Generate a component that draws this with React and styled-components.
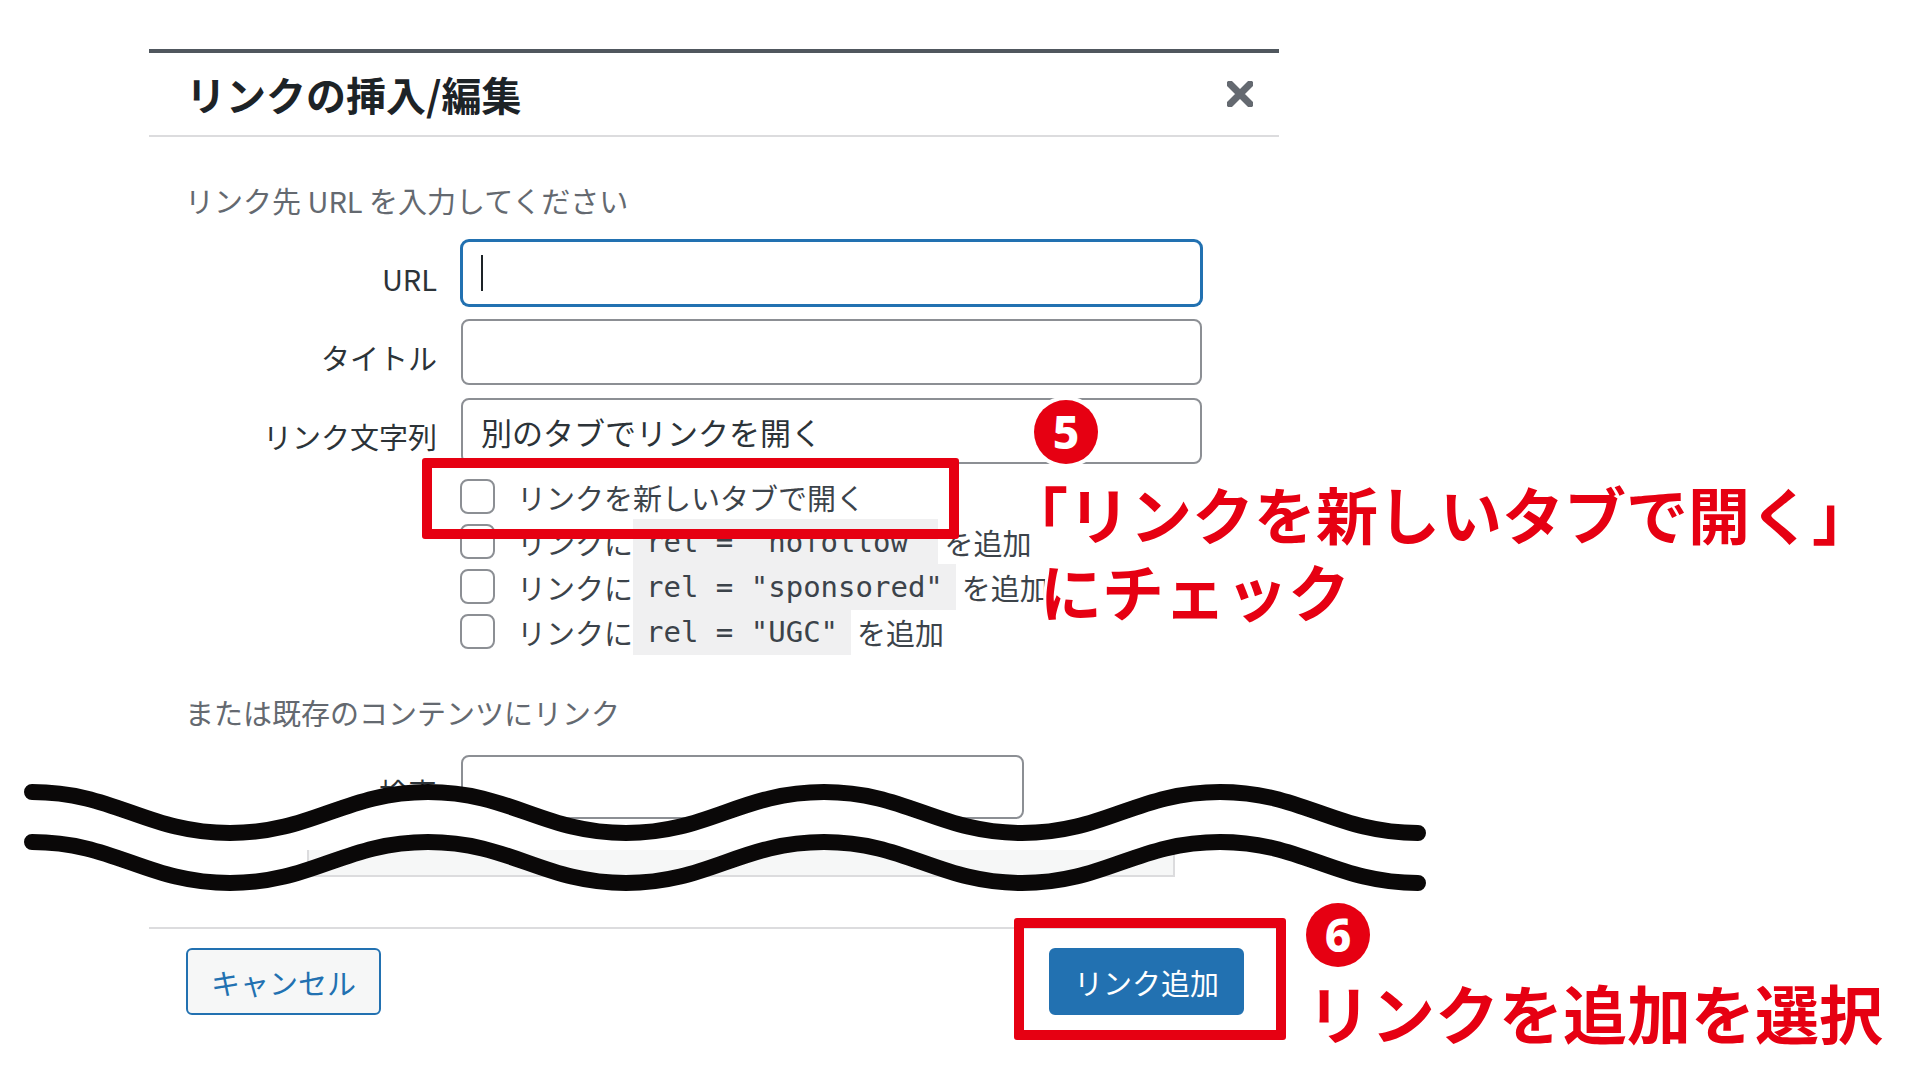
import React from 'react';
import styled, { createGlobalStyle } from 'styled-components';

const Global = createGlobalStyle`
  html, body { margin: 0; padding: 0; background: #fff; }
  body { font-family: "Noto Sans CJK JP", "Noto Sans", sans-serif; }
  * { box-sizing: border-box; }
`;

const Page = styled.div`
  position: relative;
  width: 1920px;
  height: 1080px;
  overflow: hidden;
  background: #fff;
  padding: 49px 0 0 149px;
`;

const Dialog = styled.section`
  width: 1130px;
  border-top: 4px solid #50575e;
  background: #fff;
`;

const Header = styled.header`
  height: 84px;
  display: flex;
  align-items: center;
  justify-content: space-between;
  padding: 0 26px 0 37px;
  border-bottom: 2px solid #dcdcde;
`;

const Title = styled.h1`
  margin: 0;
  font-size: 40px;
  font-weight: 700;
  line-height: 1;
  color: #1d2327;
`;

const CloseButton = styled.button`
  border: 0;
  background: none;
  padding: 0;
  width: 26px;
  height: 26px;
  display: flex;
  cursor: pointer;
`;

const Body = styled.div`
  padding: 0 36px;
`;

const SectionLabel = styled.p`
  margin: ${(p) => p.$top}px 0 0;
  font-size: 29px;
  line-height: 40px;
  color: #646970;
`;

const FieldRow = styled.label`
  display: flex;
  align-items: center;
  margin-top: ${(p) => p.$top}px;
`;

const FieldLabel = styled.span`
  flex: none;
  width: 252px;
  margin-right: 24px;
  padding-top: 10px;
  text-align: right;
  font-size: 29px;
  line-height: 40px;
  color: #2c3338;
  white-space: nowrap;
`;

const TextBox = styled.div`
  width: ${(p) => p.$w}px;
  height: ${(p) => p.$h}px;
  display: flex;
  align-items: center;
  padding: 0 18px;
  background: #fff;
  border: 2px solid ${(p) => (p.$focus ? '#2271b1' : '#8c8f94')};
  box-shadow: ${(p) => (p.$focus ? '0 0 0 1px #2271b1' : 'none')};
  border-radius: 8px;
  font-size: 31px;
  color: #2c3338;
  white-space: nowrap;
`;

const Caret = styled.span`
  display: block;
  width: 2px;
  height: 36px;
  background: #1d2327;
`;

const CheckList = styled.div`
  margin: 10px 0 0 275px;
  display: flex;
  flex-direction: column;
`;

const CheckRow = styled.label`
  height: 45px;
  display: flex;
  align-items: center;
  font-size: 29px;
  color: #3c434a;
  white-space: nowrap;
`;

const CheckBox = styled.span`
  flex: none;
  width: 35px;
  height: 35px;
  margin-right: 22px;
  border: 2px solid #8c8f94;
  border-radius: 8px;
  background: #fff;
`;

const Code = styled.code`
  display: inline-block;
  height: 46px;
  line-height: 46px;
  padding: 0 13px;
  margin-right: 6px;
  background: #f0f0f1;
  font-family: "DejaVu Sans Mono", "Liberation Mono", monospace;
  font-size: 29px;
  color: #3c434a;
`;

const ResultsStrip = styled.div`
  margin: 31px 0 0 122px;
  width: 868px;
  height: 27px;
  background: #f6f7f7;
  border: 2px solid #dcdcde;
  border-top: 0;
`;

const Footer = styled.footer`
  margin-top: 50px;
  display: flex;
  justify-content: space-between;
  padding: 19px 35px 40px 37px;
  border-top: 2px solid #dcdcde;
`;

const Button = styled.button`
  height: 67px;
  padding: 0 23px;
  border: 2px solid #2271b1;
  border-radius: 6px;
  background: ${(p) => (p.$primary ? '#2271b1' : '#f6f7f7')};
  color: ${(p) => (p.$primary ? '#fff' : '#2271b1')};
  font-family: "Noto Sans CJK JP", "Noto Sans", sans-serif;
  font-size: 29px;
  cursor: pointer;
`;

/* ---- annotations lying over the screenshot ---- */

const RedFrame = styled.div`
  position: absolute;
  left: ${(p) => p.$x}px;
  top: ${(p) => p.$y}px;
  width: ${(p) => p.$w}px;
  height: ${(p) => p.$h}px;
  border: 10px solid #e60012;
  border-radius: 3px;
  pointer-events: none;
`;

const Badge = styled.div`
  position: absolute;
  left: ${(p) => p.$x}px;
  top: ${(p) => p.$y}px;
  width: 64px;
  height: 64px;
  border-radius: 50%;
  background: #e60012;
  box-shadow: 0 0 0 4px #fff;
  color: #fff;
  display: flex;
  align-items: center;
  justify-content: center;
  font-family: "Noto Sans", "Liberation Sans", sans-serif;
  font-weight: 800;
  font-size: 46px;
  line-height: 1;
  padding-bottom: 2px;
`;

const Note = styled.div`
  position: absolute;
  left: ${(p) => p.$x}px;
  top: ${(p) => p.$y}px;
  color: #e60012;
  font-family: "Noto Sans CJK JP", sans-serif;
  font-weight: 700;
  font-size: ${(p) => p.$size}px;
  line-height: ${(p) => p.$lh}px;
  white-space: nowrap;
  text-shadow: 3px 0 0 #fff, -3px 0 0 #fff, 0 3px 0 #fff, 0 -3px 0 #fff,
    2px 2px 0 #fff, -2px -2px 0 #fff, 2px -2px 0 #fff, -2px 2px 0 #fff;
`;

const NoteLine = styled.div`
  margin-left: ${(p) => p.$indent || 0}px;
`;

const WaveSvg = styled.svg`
  position: absolute;
  left: 0;
  top: 760px;
  width: 1440px;
  height: 140px;
  pointer-events: none;
`;

function wavePath(y0, amp) {
  const h = 198;
  const k = 0.42 * h;
  let x = 32;
  let y = y0;
  let d = `M${x} ${y}`;
  for (let i = 0; i < 7; i++) {
    const ny = i % 2 === 0 ? y0 + amp : y0;
    const nx = x + h;
    d += ` C${x + k} ${y} ${nx - k} ${ny} ${nx} ${ny}`;
    x = nx;
    y = ny;
  }
  return { d, endX: x };
}

function CutMark() {
  const w1 = wavePath(792, 41);
  const w2 = wavePath(842, 41);
  return (
    <WaveSvg viewBox="0 760 1440 140">
      <path d={`${w1.d} L${w1.endX} 849 L32 849 Z`} fill="#fff" />
      <path d={w1.d} fill="none" stroke="#0a0808" strokeWidth="16" strokeLinecap="round" />
      <path d={w2.d} fill="none" stroke="#0a0808" strokeWidth="16" strokeLinecap="round" />
    </WaveSvg>
  );
}

const relOptions = ['rel = "nofollow"', 'rel = "sponsored"', 'rel = "UGC"'];

export default function App() {
  return (
    <>
      <Global />
      <Page>
        <Dialog>
          <Header>
            <Title>リンクの挿入/編集</Title>
            <CloseButton aria-label="閉じる">
              <svg width="26" height="26" viewBox="0 0 26 26">
                <path d="M3 3 L23 23 M23 3 L3 23" stroke="#646970" strokeWidth="7" strokeLinecap="round" />
              </svg>
            </CloseButton>
          </Header>

          <Body>
            <SectionLabel $top={43}>リンク先 URL を入力してください</SectionLabel>

            <FieldRow $top={20}>
              <FieldLabel>URL</FieldLabel>
              <TextBox $w={741} $h={66} $focus>
                <Caret />
              </TextBox>
            </FieldRow>
            <FieldRow $top={13}>
              <FieldLabel>タイトル</FieldLabel>
              <TextBox $w={741} $h={66} />
            </FieldRow>
            <FieldRow $top={13}>
              <FieldLabel>リンク文字列</FieldLabel>
              <TextBox $w={741} $h={66}>別のタブでリンクを開く</TextBox>
            </FieldRow>

            <CheckList>
              <CheckRow>
                <CheckBox />
                リンクを新しいタブで開く
              </CheckRow>
              {relOptions.map((r) => (
                <CheckRow key={r}>
                  <CheckBox />
                  リンクに<Code>{r}</Code>を追加
                </CheckRow>
              ))}
            </CheckList>

            <SectionLabel $top={38}>または既存のコンテンツにリンク</SectionLabel>

            <FieldRow $top={23}>
              <FieldLabel>検索</FieldLabel>
              <TextBox $w={563} $h={64} />
            </FieldRow>

            <ResultsStrip />
          </Body>

          <Footer>
            <Button>キャンセル</Button>
            <Button $primary>リンク追加</Button>
          </Footer>
        </Dialog>

        <CutMark />

        <RedFrame $x={422} $y={458} $w={537} $h={81} />
        <RedFrame $x={1014} $y={918} $w={272} $h={122} />

        <Badge $x={1034} $y={400}>5</Badge>
        <Badge $x={1306} $y={903}>6</Badge>

        <Note $x={1006} $y={475} $size={62} $lh={77}>
          <NoteLine>「リンクを新しいタブで開く」</NoteLine>
          <NoteLine $indent={34}>にチェック</NoteLine>
        </Note>
        <Note $x={1307} $y={974} $size={64} $lh={74}>
          <NoteLine>リンクを追加を選択</NoteLine>
        </Note>
      </Page>
    </>
  );
}
